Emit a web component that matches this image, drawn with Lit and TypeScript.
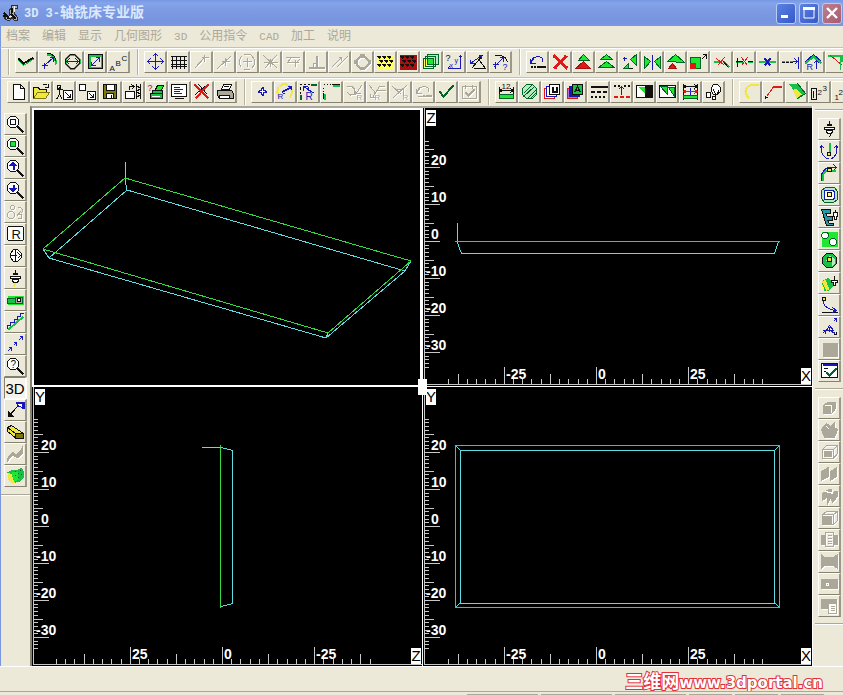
import { LitElement, html, svg, css } from "lit";
import { customElement, property } from "lit/decorators.js";

const INK: Record<string, string> = {
  k: "#101010", b: "#1818b8", g: "#18c048", G: "#20e830", d: "#006428", r: "#e01818",
  R: "#a81010", y: "#f0e840", Y: "#ffff60", w: "#ffffff", s: "#aca899", o: "#807808",
  t: "#2898a8", l: "#b8e8c0", v: "#b070d8", "-": "none",
};

// Each icon is a list of shapes: "stroke[width] fill path", or "T ink x y size text".
const ICONS: Record<string, string> = {
  polyline: "g - M2 8l5 5 11-7;k2 - M2 6l5 5 10-6",
  arcArrow: "g2 - M8 2q8 1 9 10;k - M7 1h3q6 2 6 7;b - M5 13L14 5M10 5h4v4M2 13h6M5 10v6",
  circle: "g2 - M8 2h4l5 5v4l-5 5h-4l-5-5v-4l5-5z;k - M8 2h4l5 5v4l-5 5h-4l-5-5v-4z;b - M4 9h12M7 6l-3 3 3 3M13 6l3 3-3 3",
  rect: "g2 - M4 3h12v12h-12z;k - M3 2h14v14h-14z;b - M6 13L14 5M10 5h4v4M6 9v4h4",
  text: "T k 1 18 8 A;T k 7 13 8 B;T k 13 8 8 C",
  pan: "b - M2 9h16M10 1v16M7 4l3-3 3 3M7 14l3 3 3-3M5 6l-3 3 3 3M15 6l3 3-3 3",
  grid: "k - M2 4h16M2 8h16M2 12h16M4 3v13M8 3v13M12 3v13M16 3v13;k - M2 14h16",
  end: "s - M3 16L13 5M13 2v7M10 5h7",
  mid: "s - M3 16L17 3M7 9h8M11 5v8",
  centre: "s - M6 2h7M14 3l3 4v5l-3 4M12 17h-6M4 15l-2-3v-5l2-3M5 9h9M10 5v9",
  cross: "s - M3 3L17 16M16 3L4 16M3 10h14M10 6v8",
  tangent: "s - M2 5h14M3 10h12M12 7v7M7 6l-3 4M13 10l3-3",
  perp: "s2 - M2 15h16M10 3v12;s - M7 15v-4h3",
  parallel: "s - M2 15L12 5M7 15L18 4M9 5h3v3",
  quad: "s2 - M8 4h4l4 4v4l-4 4h-4l-4-4v-4z;s s M8 2h4v2h-4zM8 15h4v2h-4zM2 8h2v3h-2zM16 8h2v3h-2z",
  layerY: "- Y M1 2h17v15h-17z;k k M2 4h3l-1 2zM7 4h3l-1 2zM12 4h3l-1 2zM4 8h3l-1 2zM9 8h3l-1 2zM14 8h3l-1 2zM2 12h3l-1 2zM7 12h3l-1 2zM12 12h3l-1 2z",
  layerR: "- R M1 2h17v15h-17z;k k M2 4h3l-1 2zM7 4h3l-1 2zM12 4h3l-1 2zM4 8h3l-1 2zM9 8h3l-1 2zM14 8h3l-1 2zM2 12h3l-1 2zM7 12h3l-1 2zM12 12h3l-1 2z",
  copy: "d l M6 2h11v10h-11z;d Y M2 6h10v10h-10z;d G M6 6h6v6h-6z;d - M4 4h10v10h-10z",
  coord: "T k 1 8 9 ?;T b 5 15 7 x;T b 10 10 7 y;b - M3 16h13v-13M14 5l2-2 2 2M5 14l-2 2",
  angle: "k - M4 16L15 3M6 16h12l-6-8;b - M3 11L14 3M3 7v4h4M11 3h3v3",
  query: "k - M4 3h6q6 1 7 7;b - M3 15L13 5M9 5h4v4M2 12h6M5 9v7;T b 12 17 9 ?",
  undo: "b - M3 11l3-6M3 6v5h5M4 10q2-6 7-6q6 1 4 6;k2 - M3 14h2M6 14h2M9 14h9",
  redo: "s - M3 11l3-6M3 6v5h5M4 10q2-6 7-6q6 1 4 6M9 13h2M12 13h6M4 14h14",
  erase: "r3 - M3 3L17 16M16 3L4 16",
  tri1: "d G M5 8l5-6 6 6z;R r M2 16l8-7 7 7z",
  tri2: "d G M4 7l6-5 6 5z;d G M2 15l8-6 8 6z",
  tri3: "d G M11 7l6-5v11z;k - M4 16h9;d G M9 11v5l-5 0z;b - M3 6h4M5 4v4",
  mirror: "b - M10 2v15;d G M2 4l6 5-6 7zM18 4l-6 5 6 7z",
  scale: "d G M2 9l8-7 9 8z;R r M3 16l4-5 4 5z",
  stretch: "d G M2 5h10v11h-10z;r r M2 11h5v5h-5z;k - M13 7L18 2M14 2h4v4",
  trim: "g2 - M2 9h6M12 9L18 15;k - M11 8L17 15;r - M5 6L13 13M13 5L6 13",
  trim2: "g - M1 10h7M13 10h5;k - M3 5v9M1 9h7M13 9h5;r - M7 5l6 8M13 5l-6 8",
  brk: "g2 - M1 9h17;b2 - M7 6l6 7M13 6l-6 7",
  extend: "g2 - M1 9h3M5 9h3M9 9h3;k - M1 10h3M5 10h3M9 10h3;b - M14 6l3 3-3 3M12 9h5M18 4v12",
  corner: "b - M2 9L10 2L18 9;g2 - M2 11L10 4L18 11;T b 3 17 9 R;b - M13 16v-8M10 11l3-3 3 3",
  fillet: "g2 - M1 3h14v6;r - M4 3L16 13;g - M14 3v14",
  fileNew: "k w M5 2h7l4 4v11h-11zM12 2v4h4",
  open: "k y M2 16v-11h5l1 2h7v3;o y M2 16l4-6h12l-4 6z;k - M11 3q3-3 5 0M17 1v4h-4",
  man: "k - M5 4v8l-3 5M5 12l3 5M2 7h6M3 3h3v3h-3z;k w M9 8h9v9h-9z;k - M11 10l5 5M16 11v4h-4",
  squares: "k w M2 2h6v6h-6zM10 9h8v8h-8z;k - M12 11l4 4M16 11v4h-4",
  save: "k o M3 2h13v14h-13z;k w M6 2h8v6h-8z;k w M6 11h7v5h-7zM11 12v4",
  send: "k w M2 9h9v7h-9z;k - M6 7v-3h4M8 2l3 2-3 3M13 1v15M17 1v15M13 3l4 3-4 3 4 3-4 3",
  book: "T R 1 8 9 ?;k G M6 13L11 3h6l-2 5z;k g M4 11h12v5h-12zM6 8h10v3h-10z;w - M5 14h8",
  monitor: "k w M2 2h15v12h-15z;b - M4 5h6M4 7h9M4 9h6M4 11h8;k - M5 16h9",
  cut: "k - M3 3L15 16M15 2L4 16M6 2l9 10M3 12l10-9;r2 - M2 2L16 16M16 2L3 16",
  print: "k w M6 7l2-5h8l-2 5z;k s M2 8h14l2 3v5h-14l-2-3z;k w M4 13h10v3h-10zM8 4h5",
  point: "b w M9 6h2v2h2v2h-2v2h-2v-2h-2v-2h2z;b - M9 5h2M9 13h2M6 8v2M14 8v2",
  radius: "y2 - M4 4q5-5 10 0q5 5 0 11M3 5q-3 6 2 11;b - M7 10L16 5M12 4h4v3M10 12l-3-2M7 9l9-5;T b 2 16 8 R",
  radius2: "k - M1 2h2M5 2h2M9 2h2M2 4v3M2 9v2;d2 - M12 2h6M2 12v5;b - M5 4L16 11M5 8v-4h4M10 4v4;T b 7 17 10 R",
  edge: "k - M2 2h1M5 2h1M8 2h1M2 5v1M2 8v1;g2 - M11 3h7M3 11v6;k - M10 2h8M2 10v6",
  ra: "s - M2 4h6M4 12h7L17 3M8 4l4 7M3 10l4 4M10 5v6h6;T s 12 17 8 R",
  rb: "s - M2 3l7 9M17 4h-5l-7 11M10 8h8M3 11v4h4;T s 7 17 8 R",
  rc: "s - M2 4l9 8M17 2L3 15M5 7h7M13 6v7;T s 12 17 8 R",
  ok: "d2 - M3 9l4 5L17 3",
  okBox: "s - M3 4h14v12h-14zM6 2v4M13 2v4;s2 - M6 10l3 3 6-6",
  dim: "T k 5 6 8 12;k - M3 4v8M17 4v8M3 8h14M6 6l-3 2 3 2M14 6l3 2-3 2;d G M3 12h14v4h-14z",
  hatch: "d l M7 2h6l4 4v6l-4 4h-6l-4-4v-6z;d - M4 11L12 3M4 14L15 4M8 16L17 7M11 16l5-5",
  layU: "r w M2 6h10v10h-10z;b w M4 4h10v10h-10z;k w M7 2h10v10h-10z;k2 - M10 4v5h4v-5",
  layA: "r v M2 6h10v10h-10z;b b M4 4h10v10h-10z;k g M7 2h10v10h-10z;k - M9 10l3-6 3 6M10 8h4",
  dashes: "k2 - M2 4h17M2 9h4M8 9h4M14 9h4M2 14h2M6 14h2M10 14h2M14 14h2",
  dashUp: "k2 - M2 3h2M6 3h2M12 3h2M16 3h2;b - M10 12v-8M7 7l3-3 3 3;r2 - M2 14h4M8 14h4M14 14h4",
  half: "k w M2 3h16v12h-16z;- G M3 4h8v8z;- k M10 3h8v12h-8z",
  half2: "k w M2 3h16v12h-16z;d G M3 4h7v8z;d G M11 5h6v9z",
  dim2: "k - M3 1v16M17 1v16M3 4h14M6 2l-3 2 3 2M14 2l3 2-3 2;b - M10 12v-7;r - M3 9h14M6 7l-3 2 3 2M14 7l3 2-3 2;d G M3 13h14v3h-14z",
  net: "k w M10 2h4l3 3v4l-3 3h-4l-2-3v-4z;k - M12 12v5M12 12l-2-5M14 12l1-4;k w M3 10h4v5h-4zM9 14h3v3h-3z",
  ypath: "y2 - M18 2h-4q-9 1-9 7q1 5 4 7",
  rpath: "k - M2 16v-3M2 15h2;r - M3 14L9 6L10 4;r2 - M10 4h8",
  leaf: "- g M2 2l9-1 8 10-8 6q0-7-9-15z;- y M10 16l-4-8 3-2 6 6z;d - M11 1l8 10-8 5",
  n123: "k - M2 6h5v11h-5zM4 8v7;T k 8 12 8 2;T k 13 8 8 3",
  n12: "T k 2 17 8 1;T k 6 12 8 2",
  zoomBox: "k w M5 2h5l3 3v5l-3 3h-5l-3-3v-5z;k2 - M12 12l6 6;k - M5 5h5v5h-5z",
  zoomFit: "k w M5 2h5l3 3v5l-3 3h-5l-3-3v-5z;k2 - M12 12l6 6;d G M5 5h5v5h-5z",
  zoomIn: "k w M5 2h5l3 3v5l-3 3h-5l-3-3v-5z;k2 - M12 12l6 6;b b M4 7l3-3h1l3 3z;b2 - M8 6v5",
  zoomOut: "k w M5 2h5l3 3v5l-3 3h-5l-3-3v-5z;k2 - M12 12l6 6;b b M4 8l3 3h1l3-3z;b2 - M8 4v5",
  zoomQ: "k w M5 2h5l3 3v5l-3 3h-5l-3-3v-5z;k2 - M12 12l6 6;T k 5 11 10 ?",
  gears: "s - M6 3h2l1 1v2l-1 1h-2l-1-1v-2zM4 9h3l2 2v3l-2 2h-3l-2-2v-3zM11 14l4-5M12 5h3l2 2v2l-2 2M13 12h3v4h-4",
  R: "k w M3 2h14l1 1v12l-1 1h-14l-1-1v-12z;T k 6 14 13 R",
  axis: "k w M8 3h4l4 4v4l-4 4h-4l-3-4v-4z;k - M5 9h6M10 3v12M12 6l3 3-3 3",
  plug: "k - M10 1v4M10 14v2;k w M8 5h4v1h-4zM5 8h10v2h-10zM7 11h6v2h-1v1h-4v-1h-1z;y2 - M10 15l-2 3",
  plug2: "k - M10 1v4M11 14v2l-2 2;k w M8 5h4v1h-4zM5 8h10v2h-10zM7 11h6v2h-1v1h-4v-1h-1z",
  target: "- G M2 5h16v9h-16z;d g M2 8h8v5h-8z;d s M10 7h7v6h-7z;k w M12 8h3v3h-3z",
  stairs: "g2 - M3 17L18 4;b - M2 16v-3h3v-3h4v-3h3v-3h3v-3h3",
  dots: "b - M2 17l4-4M3 13h3v3M8 11l3-3M8 8h3v3M13 6l4-4M14 2h3v3",
  view: "k - M3 16L12 6;k k M3 11v5h5z;b w M11 2h6v6l-2-2h-2z;b2 - M10 2h8v6",
  block: "k y M2 5l4-2 12 8v5h-7L2 9z;k o M10 11h8v5h-8z;k - M2 5l8 6v5",
  ribbon: "s s M2 15q4-9 7-6t8-6v5q-3 7-7 4t-8 5z",
  solid: "- g M2 6l5-3 4 1 5-3 2 4v6l-4 4-7 2-4-3z;- y M2 6l4 2 3 8-2 1-4-3z;- G M6 6l6-1 1 8-4 2z;d - M9 5h1M12 7h1M14 4h1M15 8h1M12 11h1M9 9h1",
  tray: "b - M2 4v7q3 6 7 6M17 4v7q-2 6-6 6M0 7l2-3 3 3M14 7l3-3 2 3;g2 - M10 1v9;k y M8 11h3v3h-3z",
  arc: "g2 - M3 17v-4q1-6 7-6h6;b - M2 17v-6q3-7 8-7h7M14 1l3 3-3 3;k y M8 5h4v3h-4z",
  pocket: "d l M6 2h9l3 4v8l-4 3h-9l-3-4v-8z;b w M5 5h9l1 2v6l-2 1h-8z;k Y M8 7h4v4h-4z",
  steps: "k t M2 2h9v4h-5l2 3h5v4h-5l2 3h4v2h-7z;k w M14 5h4v4h-1v3h-2v-3h-1zM16 2v3",
  holes: "- G M2 2h16v15h-16z;d w M4 3h4l1 2v2l-2 2h-3l-2-2v-2zM12 9h3l2 2v3l-2 2h-3l-2-2v-3z",
  ball: "k g M7 2h6l4 4v6l-4 4h-6l-4-4v-6z;- l M10 4l5 3v5l-3 3v-6h-5z;k y M8 6h4v4h-4z",
  brush: "- g M2 8l7-4 6 7-5 6h-5z;- y M2 8l4-2 4 10-3 1z;- Y M2 9l3 7h-2z;k w M12 7h6v2h-2v3h-2v-3h-2zM15 2v5",
  curve: "k - M2 17h16;b - M4 4v4q3 6 12 7M13 12l4 3-4 2;k y M3 2h3v3h-3z",
  axes: "b - M3 16l3-3M3 13h3v3M14 4l3-3M14 1h3v3M10 9v5M7 13l3-5 4 5zM12 14l4 2;k - M14 17h3v-3",
  blank: "- s M3 3h15v14h-15z",
  checkWin: "k w M2 2h16v14h-16z;b2 - M3 3h14;d2 - M7 11l3 3 7-7;k - M4 7h4M4 10h2",
  s1: "s s M4 7l4-3h8v6l-4 5h-8z;w - M5 7h7v7",
  s2: "s s M2 9l5-6 4 3 4-4v5l3 2-3 8h-10z;w - M7 6l3 3",
  s3: "s - M3 7l4-4h11v8l-4 5h-11zM3 7h11v9M14 7l4-4;s s M5 9h7v5h-7z",
  s4: "s s M2 7l7-4v9l-7 4zM11 7l6-4v9l-6 4z",
  s5: "s s M3 7l6-4h3v7l-4 7v-7l-5 4zM11 9l4-4h3v5l-5 6z;w - M6 5l8 2",
  s6: "s - M3 6l4-3h11v9l-4 4h-11zM3 6h11v10M14 6l4-3;s s M4 8h8v7h-8z",
  s7: "s s M2 5h3v9h-3zM15 5h3v9h-3z;s - M6 2h8v14h-8zM8 5h4M8 8h4M8 11h4M8 13h4",
  s8: "s s M2 2l3 3h9l4-3v14l-4-3h-9l-3 3z",
  s9: "s s M2 5h16v9h-16z;w - M7 9h2v2h-2z",
  s10: "s s M2 3h15v9h-15z;s w M9 7h8v10h-8zM11 10h4M11 12h4M11 14h4",
};

function glyph(name: string) {
  const parts = ICONS[name].split(";").map((part) => {
    const f = part.split(" ");
    if (f[0] === "T") {
      return svg`<text x=${f[2]} y=${f[3]} font-size=${f[4]} fill=${INK[f[1]]}>${f[5]}</text>`;
    }
    return svg`<path d=${f.slice(2).join(" ")} stroke=${INK[f[0][0]]} stroke-width=${f[0].slice(1) || "1"} fill=${INK[f[1]]}></path>`;
  });
  return html`<svg class="glyph" viewBox="-0.5 -0.5 20 20" aria-hidden="true">${parts}</svg>`;
}

@customElement("tool-group")
class ToolGroup extends LitElement {
  @property() icons = "";
  @property({ type: Boolean, reflect: true }) vertical = false;

  static styles = css`
    :host { display: flex; flex: none; }
    :host([vertical]) { flex-direction: column; }
    button {
      box-sizing: border-box; display: flex; flex: none; align-items: center; justify-content: center;
      width: 23px; height: 22px; padding: 0; background: #ece9d8; border: 1px solid #fff;
      border-right: 2px solid #9b9888; border-bottom-color: #85826f; border-radius: 0;
    }
    button.pressed { border-color: #85826f #fff #fff #85826f; background: #f5f3ea; font: 15px "Liberation Sans", sans-serif; color: #000; -webkit-text-stroke: 0; }
    button:disabled .glyph { filter: drop-shadow(1px 1px 0 #fff); }
    .glyph { width: 20px; height: 20px; flex: none; shape-rendering: crispEdges; font-family: "Liberation Sans", sans-serif; }
  `;

  render() {
    return this.icons.split(" ").map((name) => {
      if (name === "3D") return html`<button class="pressed" aria-pressed="true">3D</button>`;
      const off = ICONS[name].includes("s ") && !/(^|;)[kbdgr]\d? /.test(ICONS[name]);
      return html`<button aria-label=${name} ?disabled=${off}>${glyph(name)}</button>`;
    });
  }
}

type Ruler = { zeroX: number; zeroY: number; dir: number; axisY: number; top: number; bottom: number; from: number; to: number; };

function ruler(r: Ruler, vName: string, hName: string, axisX: number) {
  const marks = [];
  for (let u = r.bottom; u <= r.top; u++) {
    const y = Math.round(r.zeroY - u * 3.7);
    const len = u % 10 === 0 ? 15 : u % 5 === 0 ? 9 : 4;
    marks.push(svg`<rect x=${axisX + 1} y=${y} width=${len} height="1"></rect>`);
    if (u % 10 === 0) marks.push(svg`<text x=${u < 0 ? 4 : 9} y=${y - 2}>${u}</text>`);
  }
  for (let u = r.from; u <= r.to; u += 2.5) {
    const x = Math.round(r.zeroX + r.dir * u * 3.69);
    const len = u % 25 === 0 ? 17 : u % 12.5 === 0 ? 10 : 5;
    marks.push(svg`<rect x=${x} y=${r.axisY - len} width="1" height=${len}></rect>`);
    if (u % 25 === 0) marks.push(svg`<text x=${x + 2} y=${r.axisY - 5}>${u}</text>`);
  }
  const vx = axisX + 2;
  const hx = 379;
  return svg`<g class="ruler">
    <rect x=${axisX} y="0" width="1" height=${r.axisY}></rect>
    <rect x=${axisX} y=${r.axisY} width="100%" height="1"></rect>
    ${marks}
    <rect class="tag" x=${vx} y="2" width="10" height="16"></rect>
    <text class="name" x=${vx + 5} y="15">${vName}</text>
    <rect class="tag" x=${hx} y=${r.axisY - 16} width="10" height="16"></rect>
    <text class="name" x=${hx + 5} y=${r.axisY - 3}>${hName}</text>
  </g>`;
}

@customElement("app-root")
class AppRoot extends LitElement {
  static styles = css`
    :host {
      display: flex; flex-direction: column; height: 100vh; overflow: hidden; background: #ece9d8;
      font: 12px/16px "Liberation Sans", "Noto Sans CJK SC", sans-serif;
    }
    .title {
      display: flex; align-items: center; flex: none; height: 26px; padding: 0 1px 0 3px; gap: 3px;
      background: linear-gradient(#7697e7, #84a3e8 3px, #7d9be3 10px, #7794df 22px, #7b99e1);
    }
    .title h1 { flex: 1; margin: 0; padding-left: 2px; color: #dce8fc; font: bold 12px/18px "Liberation Mono", "Noto Sans CJK SC", monospace; white-space: pre; }
    .title h1 span { font-size: 14px; }
    .logo { width: 16px; height: 18px; shape-rendering: crispEdges; flex: none; }
    .win {
      box-sizing: border-box; width: 20px; height: 21px; padding: 0; border: 1px solid #b9caf3; border-radius: 3px;
      background: linear-gradient(135deg, #5c82e2, #3558c8); display: flex; align-items: center; justify-content: center;
    }
    .win.close { background: linear-gradient(135deg, #bf7f8d, #a85c70); }
    .win svg { width: 16px; height: 16px; flex: none; }
    .menu { display: flex; flex: none; gap: 12px; height: 21px; padding-left: 5px; align-items: center; border-left: 1px solid #7a96df; box-sizing: border-box; }
    .menu button { padding: 0; border: 0; background: none; color: #aca899; font: 12px/16px "Liberation Mono", "Noto Sans CJK SC", monospace; }
    .menu .latin { font-size: 11px; }
    .bar {
      box-sizing: border-box; display: flex; flex: none; align-items: flex-start; height: 29px; overflow: hidden;
      border-top: 1px solid #c5c2b2; border-left: 1px solid #7a96df; padding: 1px 0 0; box-shadow: inset 0 1px #fff;
    }
    .bar tool-group { padding: 2px 7px 2px 6px; border-left: 1px solid #b5b2a2; box-shadow: inset 1px 0 #fff; }
    .bar.top { padding-left: 7px; height: 30px; }
    .bar.low tool-group:first-child { border-left: 0; box-shadow: none; }
    main { flex: 1; min-height: 0; display: grid; grid-template-columns: 31px minmax(0, 1fr) 31px; }
    .side { border-left: 1px solid #7a96df; display: flex; flex-direction: column; align-items: center; box-sizing: border-box; overflow: hidden; }
    .left { border-right: 1px solid #85826f; }
    .left tool-group { padding: 7px 0; }
    .left hr, .right hr { width: 100%; margin: 0; border: 0; border-top: 1px solid #aca899; border-bottom: 1px solid #fff; }
    .right { border-left: 1px solid #fff; padding-left: 2px; }
    .right hr { margin-top: 3px; }
    .right tool-group { padding: 7px 0 3px; }
    .views {
      position: relative; display: grid; grid-template: 1fr 1fr / 1fr 1fr; background: #000;
      border-left: 1px solid #85826f; border-top: 2px solid #aca899;
    }
    .view { position: relative; overflow: hidden; min-width: 0; min-height: 0; }
    .view svg { display: block; width: 100%; height: 100%; shape-rendering: crispEdges; }
    .active { outline: 2px solid #fff; outline-offset: -2px; }
    .split { box-sizing: border-box; border-left: 1px solid #fff; }
    .split svg { margin-left: -1px; }
    .upper { border-bottom: 1px solid #fff; }
    .grip { position: absolute; left: 50%; top: 50%; width: 9px; height: 16px; margin: -8px 0 0 -4px; background: #fff; }
    .ruler rect { fill: #c8c8c8; }
    .ruler text { fill: #fff; font: bold 14px "Liberation Sans", sans-serif; }
    .ruler .tag { fill: #fff; }
    .ruler .name { fill: #000; font-weight: 400; font-size: 15px; text-anchor: middle; }
    .green { stroke: #30dc40; fill: none; }
    .cyan { stroke: #60dce0; fill: none; }
    footer { flex: none; box-sizing: border-box; height: 29px; border-top: 1px solid #fff; display: flex; flex-direction: column; }
    .brand {
      align-self: flex-end; height: 24px; padding: 3px 20px 0 0; box-sizing: border-box; color: #fff; text-decoration: none;
      font: bold 15px/20px "DejaVu Sans", "Noto Sans CJK SC", sans-serif;
      -webkit-text-stroke: 2px #e23038; paint-order: stroke fill; white-space: nowrap;
    }
    .brand span { font-size: 18px; font-family: "Noto Sans CJK SC", sans-serif; }
    .cells { display: flex; gap: 3px; justify-content: flex-end; padding: 2px 19px 0 0; border-top: 1px solid #aca899; }
    .cell { height: 1px; background: #aca899; width: 71px; }
    .cell.short { width: 43px; }
  `;

  render() {
    const menu = ["档案", "编辑", "显示", "几何图形", "3D", "公用指令", "CAD", "加工", "说明"];
    const upper: Ruler = { zeroX: 174, zeroY: 133, dir: 1, axisY: 276, top: 27, bottom: -34, from: -40, to: 45 };
    const lower: Ruler = { zeroX: 174, zeroY: 139, dir: 1, axisY: 277, top: 29, bottom: -33, from: -40, to: 45 };
    const side: Ruler = { ...lower, zeroX: 190, dir: -1 };
    return html`
      <header class="title">
        <svg class="logo" viewBox="0 0 16 18" aria-hidden="true">
          <path d="M8 1h6v3h-3v5l3 4v3h-3l-2-3-2 3h-3l-3-2 3-2h3l-1-5 2-3z" fill="#b0b0b0" stroke="#303030"></path>
          <path d="M0 12h4l2 3M1 9l3 3M9 4v5M8 10l5 5" stroke="#101010" stroke-width="2" fill="none"></path>
          <path d="M11 2v6M6 12h3" stroke="#f4f4f4"></path>
        </svg>
        <h1>3D 3-<span>轴铣床专业版</span></h1>
        <button class="win" aria-label="最小化"><svg viewBox="0 0 16 16"><path d="M3 10h7v3h-7z" fill="#fff"></path></svg></button>
        <button class="win" aria-label="最大化"><svg viewBox="0 0 16 16"><path d="M3 3h10v10h-10z" fill="none" stroke="#fff"></path><path d="M2 2h12v3h-12z" fill="#fff"></path></svg></button>
        <button class="win close" aria-label="关闭"><svg viewBox="0 0 16 16"><path d="M3 3l10 10M13 3L3 13" stroke="#fff" stroke-width="2.4"></path></svg></button>
      </header>
      <nav class="menu">${menu.map((m) => html`<button class=${/^[A-Z0-9]+$/.test(m) ? "latin" : ""}>${m}</button>`)}</nav>
      <div class="bar top">
        <tool-group icons="polyline arcArrow circle rect text"></tool-group>
        <tool-group icons="pan grid end mid centre cross tangent perp parallel quad layerY layerR copy coord angle query"></tool-group>
        <tool-group icons="undo erase tri1 tri2 tri3 mirror scale stretch trim trim2 brk extend corner fillet"></tool-group>
      </div>
      <div class="bar low">
        <tool-group icons="fileNew open man squares save send book monitor cut print"></tool-group>
        <tool-group icons="point radius radius2 edge ra rb rc redo ok okBox"></tool-group>
        <tool-group icons="dim hatch layU layA dashes dashUp half half2 dim2 net"></tool-group>
        <tool-group icons="ypath rpath leaf n123 n12"></tool-group>
      </div>
      <main>
        <aside class="side left">
          <tool-group vertical icons="zoomBox zoomFit zoomIn zoomOut gears R axis plug target stairs dots zoomQ 3D view block ribbon solid"></tool-group>
          <hr>
        </aside>
        <section class="views">
          <div class="view active"><svg>
            <path class="cyan" d="M93 54v17l2 11M379 153l-6 10M296 225l-2 5M11 141l6 9M95 82L373 163L294 230L17 150z"></path>
            <path class="green" d="M93 70L379 153L296 225L11 141z"></path>
          </svg></div>
          <div class="view split upper"><svg>
            ${ruler(upper, "Z", "X", 2)}
            <path class="cyan" d="M35.5 115v20l4 10.5h313l4-12"></path>
            <path class="green" d="M33 133.5h325"></path>
          </svg></div>
          <div class="view"><svg>
            ${ruler(side, "Y", "Z", 1)}
            <path class="cyan" d="M170 60.5h19l11.5 3v153l-11.5 3"></path>
            <path class="green" d="M188.5 58v163"></path>
          </svg></div>
          <div class="view split"><svg>
            ${ruler(lower, "Y", "X", 2)}
            <path class="cyan" d="M38.5 63.5h314v153h-314zM34 59l4 4M357 59l-4 4M34 220l4-4M357 220l-4-4"></path>
            <path class="green" d="M33.5 58.5h324v162h-324z"></path>
          </svg></div>
          <div class="grip"></div>
        </section>
        <aside class="side right">
          <hr>
          <tool-group vertical icons="plug2 tray arc pocket steps holes ball brush curve axes blank checkWin"></tool-group>
          <hr>
          <tool-group vertical icons="s1 s2 s3 s4 s5 s6 s7 s8 s9 s10"></tool-group>
          <hr>
        </aside>
      </main>
      <footer>
        <a class="brand" href="#"><span>三维网</span>www.3dportal.cn</a>
        <div class="cells"><i class="cell"></i><i class="cell"></i><i class="cell"></i><i class="cell short"></i><i class="cell short"></i><i class="cell short"></i></div>
      </footer>`;
  }
}
